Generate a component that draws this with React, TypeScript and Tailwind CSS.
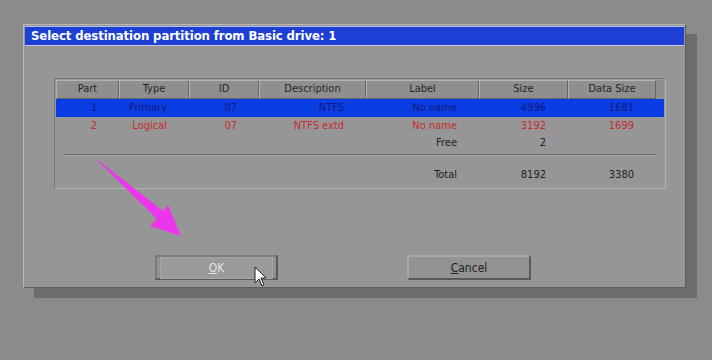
const cols = "grid grid-cols-[63px_70px_70px_107px_113px_89px_88px]"

const headers = ["Part", "Type", "ID", "Description", "Label", "Size", "Data Size"]

const rows = [
  { cells: ["1", "Primary", "07", "NTFS", "No name", "4996", "1681"], selected: true },
  { cells: ["2", "Logical", "07", "NTFS extd", "No name", "3192", "1699"], selected: false },
]

const font = { fontFamily: '"DejaVu Sans Condensed", "DejaVu Sans", sans-serif' }

export default function App() {
  return (
    <div className="relative w-[712px] h-[360px] bg-[#8b8b8b] overflow-hidden" style={font}>
      <div className="pl-[23px] pt-[24px]">
        {/* dialog */}
        <div className="w-[663px] h-[264px] bg-[#969696] border border-t-[#b8b8b8] border-l-[#b8b8b8] border-r-[#5e5e5e] border-b-[#5e5e5e] shadow-[11px_10px_0_#6c6c6c] flex flex-col">
          <div className="h-[20px] mx-[1px] mt-[1px] bg-[#1d3fd6] border-t border-b border-t-[#b8c0e8] border-b-[#c8c8d8] flex items-center pl-[6px]">
            <span className="text-white text-[13px] font-bold tracking-[-0.1px]">
              Select destination partition from Basic drive: 1
            </span>
          </div>

          {/* table box */}
          <div className="ml-[30px] mt-[32px] w-[612px] h-[111px] border border-t-[#767676] border-l-[#767676] border-r-[#b2b2b2] border-b-[#b2b2b2] p-[1px] text-[11px]">
            <div className="flex bg-[#8f8f8f] pr-[8px]">
              <div className={cols}>
                {headers.map((h) => (
                  <div
                    key={h}
                    className="h-[19px] flex items-center justify-center text-[#262626] border border-t-[#b4b4b4] border-l-[#b4b4b4] border-r-[#666] border-b-[#666]"
                  >
                    {h}
                  </div>
                ))}
              </div>
            </div>
            {rows.map((r) => (
              <div key={r.cells[0]} className={r.selected ? "bg-[#0b3de4]" : ""}>
                <div className={cols}>
                  {r.cells.map((c, i) => (
                    <div
                      key={i}
                      className={`h-[18px] flex items-center justify-end pr-[22px] ${
                        r.selected ? "text-[#0d1a7a]" : "text-[#c92a2a]"
                      }`}
                    >
                      {c}
                    </div>
                  ))}
                </div>
              </div>
            ))}
            <div className={cols}>
              <div className="col-start-5 h-[16px] flex items-center justify-end pr-[22px] text-[#222]">Free</div>
              <div className="h-[16px] flex items-center justify-end pr-[22px] text-[#222]">2</div>
            </div>
            <div className="mx-[7px] mt-[3px] h-[2px] bg-[#6a6a6a] border-b border-[#a8a8a8]" />
            <div className={`${cols} mt-[10px]`}>
              <div className="col-start-5 h-[18px] flex items-center justify-end pr-[22px] text-[#222]">Total</div>
              <div className="h-[18px] flex items-center justify-end pr-[22px] text-[#222]">8192</div>
              <div className="h-[18px] flex items-center justify-end pr-[22px] text-[#222]">3380</div>
            </div>
          </div>

          {/* buttons */}
          <div className="flex mt-[66px] pl-[131px] gap-[129px]">
            <button className="w-[123px] h-[25px] bg-[#929292] border-2 border-t-[#7a7a7a] border-l-[#7a7a7a] border-r-[#5a5a5a] border-b-[#5a5a5a] text-[12px] text-[#e4e4e4] flex items-center justify-center">
              <span className="px-[30px] py-[1px] border border-[#a6a6a6] bg-[#9a9a9a] w-[113px]">
                <span className="underline">O</span>K
              </span>
            </button>
            <button className="w-[124px] h-[25px] bg-[#939393] border-2 border-t-[#a8a8a8] border-l-[#a8a8a8] border-r-[#5a5a5a] border-b-[#5a5a5a] text-[12px] text-[#202020] flex items-center justify-center">
              <span className="underline">C</span>ancel
            </button>
          </div>
        </div>
      </div>

      {/* annotation arrow */}
      <svg className="absolute inset-0 pointer-events-none" width="712" height="360" viewBox="0 0 712 360">
        <polygon
          points="94,157 163,211 168,205 181,236 150,226 157,219"
          fill="#ee35ee"
        />
      </svg>

      {/* mouse cursor */}
      <svg className="absolute left-[254px] top-[266px] pointer-events-none" width="14" height="22" viewBox="0 0 14 22">
        <path d="M1 1 L1 17 L5 13 L8 20 L10 19 L7 12 L12 12 Z" fill="#fff" stroke="#222" strokeWidth="1" strokeLinejoin="round" />
      </svg>
    </div>
  )
}
